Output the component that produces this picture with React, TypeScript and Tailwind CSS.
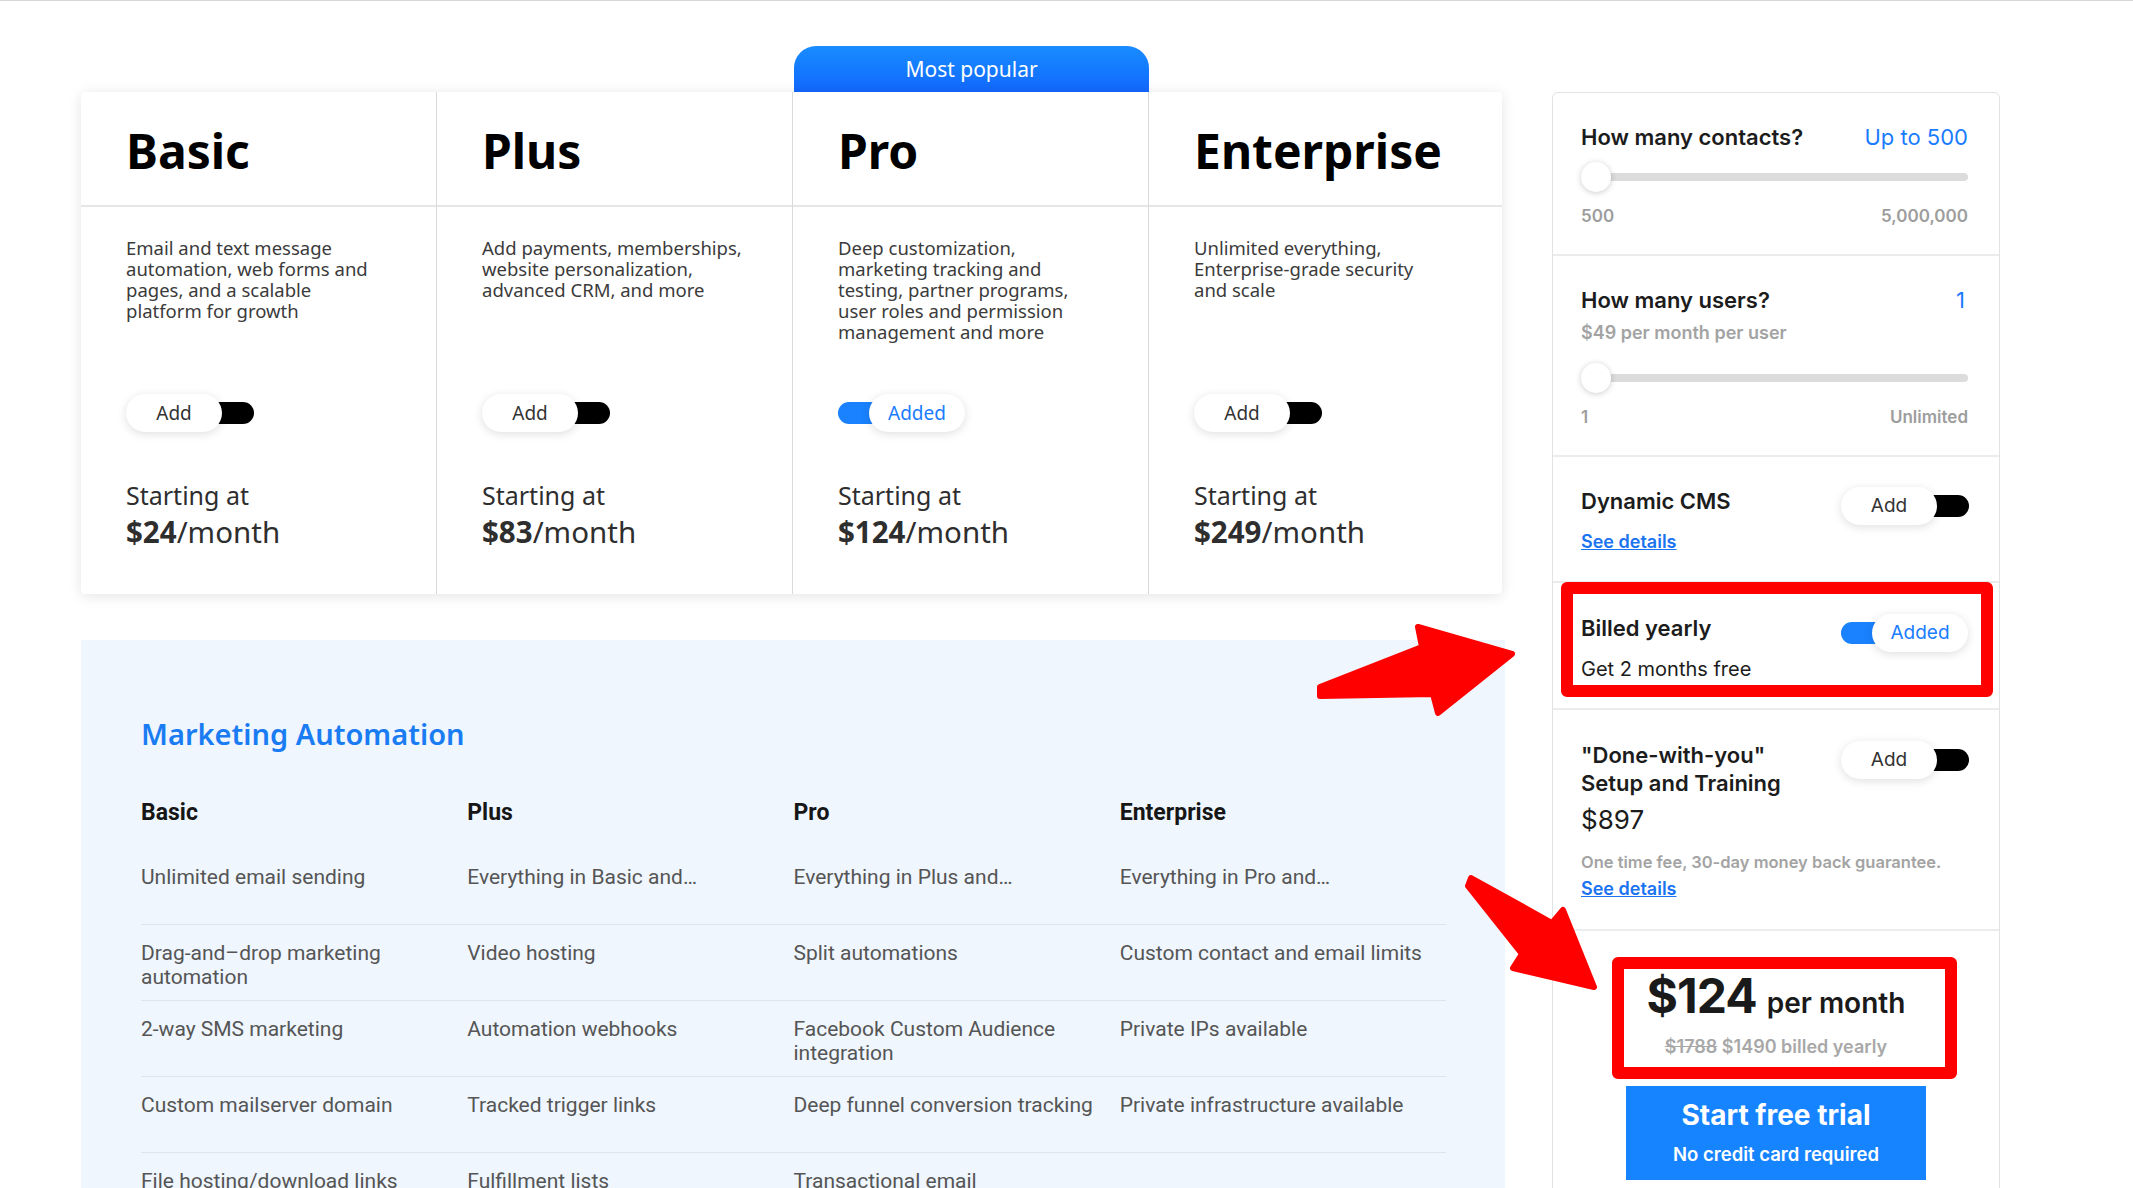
import clsx from "clsx";

// ---------------------------------------------------------------------------
// Data
// ---------------------------------------------------------------------------

interface Plan {
  name: string;
  lines: string[];
  price: string;
  added?: boolean;
}

const plans: Plan[] = [
  {
    name: "Basic",
    lines: ["Email and text message", "automation, web forms and", "pages, and a scalable", "platform for growth"],
    price: "$24",
  },
  {
    name: "Plus",
    lines: ["Add payments, memberships,", "website personalization,", "advanced CRM, and more"],
    price: "$83",
  },
  {
    name: "Pro",
    lines: [
      "Deep customization,",
      "marketing tracking and",
      "testing, partner programs,",
      "user roles and permission",
      "management and more",
    ],
    price: "$124",
    added: true,
  },
  {
    name: "Enterprise",
    lines: ["Unlimited everything,", "Enterprise-grade security", "and scale"],
    price: "$249",
  },
];

const features: string[][] = [
  ["Unlimited email sending", "Everything in Basic and…", "Everything in Plus and…", "Everything in Pro and…"],
  ["Drag-and–drop marketing automation", "Video hosting", "Split automations", "Custom contact and email limits"],
  ["2-way SMS marketing", "Automation webhooks", "Facebook Custom Audience integration", "Private IPs available"],
  ["Custom mailserver domain", "Tracked trigger links", "Deep funnel conversion tracking", "Private infrastructure available"],
  ["File hosting/download links", "Fulfillment lists", "Transactional email", ""],
];

const plex = "font-['Noto_Sans',sans-serif]";
const work = "font-['Inter',sans-serif]";
const table = "font-['Roboto',sans-serif]";

// ---------------------------------------------------------------------------
// Small pieces
// ---------------------------------------------------------------------------

const Toggle = ({ on, font }: { on?: boolean; font: string }) => (
  <div className="relative h-[38px] w-[128px] shrink-0">
    <span
      className={clsx(
        "absolute top-[8px] h-[22px] w-[70px] rounded-full",
        on ? "left-0 bg-[#1a82ff]" : "right-0 bg-black"
      )}
    />
    <span
      className={clsx(
        "absolute top-0 flex h-[38px] w-[96px] items-center justify-center rounded-full bg-white text-[19px] shadow-[0_2px_10px_rgba(0,0,0,0.13)]",
        on ? "right-[1px] text-[#1a7cff]" : "left-0 text-[#333]",
        font
      )}
    >
      {on ? "Added" : "Add"}
    </span>
  </div>
);

const Slider = () => (
  <div className="relative h-[30px]">
    <div className="absolute inset-x-0 top-[11px] h-[8px] rounded-full bg-[#dcdcdc]" />
    <div className="absolute left-0 top-0 h-[30px] w-[30px] rounded-full bg-white shadow-[0_1px_6px_rgba(0,0,0,0.2)]" />
  </div>
);

const Range = ({ min, max }: { min: string; max: string }) => (
  <div className="mt-[14px] flex justify-between text-[17px] font-semibold leading-[20px] text-[#9d9d9d]">
    <span>{min}</span>
    <span>{max}</span>
  </div>
);

const SeeDetails = ({ className }: { className?: string }) => (
  <a className={clsx("block text-[18px] font-semibold leading-[22px] text-[#1a73f0] underline", className)}>
    See details
  </a>
);

// ---------------------------------------------------------------------------
// Plan card
// ---------------------------------------------------------------------------

const PlanColumn = ({ plan, last }: { plan: Plan; last: boolean }) => (
  <div className={clsx("flex flex-col", !last && "border-r border-[#d9d9d9]")}>
    <div className="flex h-[115px] items-center border-b-2 border-[#e6e6e6] px-[45px] pt-[5px]">
      <h2 className="text-[48px] font-bold leading-none text-black">{plan.name}</h2>
    </div>
    <div className="px-[45px] pb-[44px] pt-[30px]">
      <p className="h-[105px] text-[18.5px] leading-[21px] text-[#3b3b3b]">
        {plan.lines.map((l) => (
          <span key={l} className="block">
            {l}
          </span>
        ))}
      </p>
      <div className="mt-[52px]">
        <Toggle on={plan.added} font={plex} />
      </div>
      <div className="mt-[47px] text-[25px] leading-[32px] text-[#2e2e2e]">Starting at</div>
      <div className="mt-[3px] text-[29.5px] leading-[36px] text-[#2e2e2e]">
        <span className="font-bold">{plan.price}</span>/month
      </div>
    </div>
  </div>
);

// ---------------------------------------------------------------------------
// Page
// ---------------------------------------------------------------------------

export default function App() {
  return (
    <div className="relative h-[1188px] w-[2133px] overflow-hidden border-t border-[#d6d6d6] bg-white">
      <div className="flex items-start pl-[81px] pt-[45px]">
        {/* Left: plans + features */}
        <div className={clsx("w-[1424px]", plex)}>
          <div className="ml-[713px] flex h-[46px] w-[355px] items-center justify-center rounded-t-[22px] bg-linear-to-b from-[#1a8cff] to-[#1467fd] pt-[2px] text-[21px] text-white">
            Most popular
          </div>
          <div className="grid w-[1421px] grid-cols-[356px_356px_356px_353px] rounded-[4px] bg-white shadow-[0_2px_14px_rgba(0,0,0,0.11)]">
            {plans.map((p, i) => (
              <PlanColumn key={p.name} plan={p} last={i === plans.length - 1} />
            ))}
          </div>

          {/* Feature table */}
          <section className="mt-[46px] h-[600px] bg-[#eff6fe] pl-[60px] pt-[76px]">
            <h3 className={clsx("text-[29px] font-semibold leading-[36px] text-[#1a7cf3]", plex)}>
              Marketing Automation
            </h3>
            <div className={clsx("mt-[47px] w-[1305px]", table)}>
              <div className="grid grid-cols-4 text-[23px] font-bold leading-[28px] text-[#161616]">
                {plans.map((p) => (
                  <div key={p.name}>{p.name}</div>
                ))}
              </div>
              <div className="mt-[22px]">
                {features.map((row, r) => (
                  <div
                    key={r}
                    className={clsx(
                      "grid h-[76px] grid-cols-4 pt-[16px] text-[21px] leading-[24px] text-[#555]",
                      r < features.length - 1 && "border-b border-[#dfe5ec]"
                    )}
                  >
                    {row.map((c, j) => (
                      <div key={j} className="pr-[14px]">
                        {c}
                      </div>
                    ))}
                  </div>
                ))}
              </div>
            </div>
          </section>
        </div>

        {/* Right: configurator */}
        <aside
          className={clsx(
            "ml-[47px] mt-[46px] h-[1200px] w-[448px] rounded-[6px] border border-[#e2e2e2] bg-white text-[#1c1c1c]",
            work
          )}
        >
          <div className="border-b-2 border-[#ececec] pb-[28px] pl-[28px] pr-[31px] pt-[29px]">
            <div className="flex items-center justify-between leading-[30px]">
              <span className="text-[22px] font-semibold">How many contacts?</span>
              <span className="text-[22px] text-[#1a7cff]">Up to 500</span>
            </div>
            <div className="mt-[10px]">
              <Slider />
            </div>
            <Range min="500" max="5,000,000" />
          </div>

          <div className="border-b-2 border-[#ececec] pb-[28px] pl-[28px] pr-[31px] pt-[29px]">
            <div className="flex items-center justify-between leading-[30px]">
              <span className="text-[22px] font-semibold">How many users?</span>
              <span className="pr-[3px] text-[22px] text-[#1a7cff]">1</span>
            </div>
            <div className="mt-[7px] text-[18px] font-semibold leading-[22px] text-[#a3a3a3]">
              $49 per month per user
            </div>
            <div className="mt-[19px]">
              <Slider />
            </div>
            <Range min="1" max="Unlimited" />
          </div>

          <div className="flex justify-between border-b-2 border-[#ececec] pb-[28px] pl-[28px] pr-[30px] pt-[29px]">
            <div>
              <div className="text-[22px] font-semibold leading-[30px]">Dynamic CMS</div>
              <SeeDetails className="mt-[15px]" />
            </div>
            <div className="mt-[1px]">
              <Toggle font={work} />
            </div>
          </div>

          <div className="relative flex justify-between border-b-2 border-[#ececec] pb-[26px] pl-[28px] pr-[30px] pt-[30px]">
            <div>
              <div className="text-[22px] font-semibold leading-[30px]">Billed yearly</div>
              <div className="mt-[13px] text-[20px] leading-[26px]">Get 2 months free</div>
            </div>
            <div className="mt-[1px]">
              <Toggle on font={work} />
            </div>
            {/* annotation */}
            <div className="pointer-events-none absolute -top-[1px] bottom-[11px] left-[8px] right-[6px] rounded-[6px] border-[12px] border-[#ff0000]" />
          </div>

          <div className="border-b-2 border-[#ececec] pb-[29px] pl-[28px] pr-[30px] pt-[31px]">
            <div className="flex justify-between">
              <div className="text-[22px] font-semibold leading-[28px]">
                "Done-with-you"
                <br />
                Setup and Training
              </div>
              <Toggle font={work} />
            </div>
            <div className="mt-[6px] text-[26px] leading-[34px]">$897</div>
            <div className="mt-[14px] whitespace-nowrap text-[16.5px] font-semibold leading-[22px] text-[#a3a3a3]">
              One time fee, 30-day money back guarantee.
            </div>
            <SeeDetails className="mt-[5px]" />
          </div>

          <div className="relative pt-[37px]">
            <div className="flex items-baseline justify-center gap-[10px] leading-[56px]">
              <span className="text-[48px] font-bold tracking-[-1px] text-[#1a1a1a]">$124</span>
              <span className="text-[28px] font-semibold text-[#1a1a1a]">per month</span>
            </div>
            <div className="mt-[5px] text-center text-[18px] font-semibold leading-[22px] text-[#a8a8a8]">
              <span className="line-through">$1788</span> $1490 billed yearly
            </div>
            <button className="mx-auto mt-[28px] flex h-[94px] w-[300px] flex-col items-center bg-[#1784ff] pt-[12px] text-white">
              <span className="text-[28px] font-bold leading-[34px]">Start free trial</span>
              <span className="mt-[11px] text-[18.5px] font-semibold leading-[22px]">No credit card required</span>
            </button>
            {/* annotation */}
            <div className="pointer-events-none absolute left-[59px] top-[26px] h-[122px] w-[345px] rounded-[6px] border-[12px] border-[#ff0000]" />
          </div>
        </aside>
      </div>

      {/* Annotation arrows */}
      <svg
        className="pointer-events-none absolute left-0 top-0"
        width={2133}
        height={1188}
        viewBox="0 0 2133 1188"
      >
        <polygon
          points="1320,686 1422,646 1418,626 1512,653 1438,712 1433,693 1320,695"
          fill="#ff0000"
          stroke="#ff0000"
          strokeWidth={6}
          strokeLinejoin="round"
        />
        <polygon
          points="1471,877 1552,922 1563,909 1594,986 1513,967 1522,953 1468,885"
          fill="#ff0000"
          stroke="#ff0000"
          strokeWidth={6}
          strokeLinejoin="round"
        />
      </svg>
    </div>
  );
}
